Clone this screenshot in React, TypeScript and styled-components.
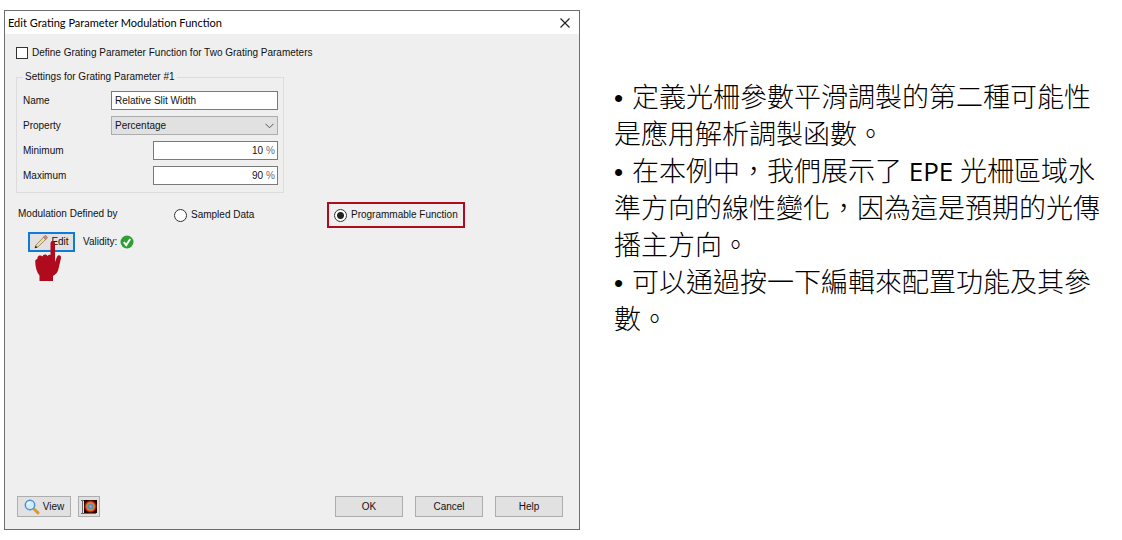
import React from "react";
import styled, { createGlobalStyle } from "styled-components";

const GlobalStyle = createGlobalStyle`
  * { box-sizing: border-box; }
  body {
    margin: 0;
    background: #ffffff;
    color: #111111;
    font-family: "Liberation Sans", Arial, sans-serif;
  }
  button, input, select { font: inherit; color: inherit; }
`;

const Page = styled.main`
  display: flex;
  align-items: stretch;
  gap: 34px;
  min-height: 100vh;
  padding: 10px 16px 10px 4px;
`;

const Dialog = styled.section`
  display: flex;
  flex-direction: column;
  flex: 0 1 576px;
  border: 1px solid #6e6e6e;
  background: #efefef;
  font-size: 10px;
  line-height: 14px;
`;

const TitleBar = styled.header`
  display: flex;
  align-items: center;
  justify-content: space-between;
  height: 23px;
  padding: 0 8px 0 3px;
  background: #ffffff;
`;

const Title = styled.h1`
  margin: 0;
  font: 400 11px/16px Lato, sans-serif;
  color: #000000;
`;

const CloseButton = styled.button`
  display: flex;
  padding: 0;
  border: 0;
  background: transparent;
`;

const Content = styled.form`
  display: flex;
  flex-direction: column;
  flex: 1;
  padding: 12px 16px 12px 11px;
`;

const Option = styled.label`
  display: flex;
  align-items: center;
  gap: 4px;
  white-space: nowrap;
`;

const CheckBox = styled.input`
  appearance: none;
  width: 12px;
  height: 12px;
  margin: 0;
  border: 1px solid #333333;
  background: #ffffff;
`;

const Group = styled.fieldset`
  width: 268px;
  margin: 10px 0 0;
  padding: 7px 5px 7px 6px;
  border: 1px solid #dcdcdc;
`;

const Legend = styled.legend`
  padding: 0 2px;
`;

const Fields = styled.div`
  display: flex;
  flex-direction: column;
  gap: 6px;
`;

const Field = styled.div`
  display: flex;
  align-items: center;
  justify-content: space-between;
`;

const TextInput = styled.input`
  width: 167px;
  height: 19px;
  padding: 0 3px;
  border: 1px solid #7a7a7a;
  border-radius: 0;
  background: #ffffff;
`;

const SelectBox = styled.div`
  display: grid;
  align-items: center;
  width: 167px;
  height: 19px;

  > * { grid-area: 1 / 1; }
  > svg { justify-self: end; margin-right: 4px; pointer-events: none; }
`;

const Select = styled.select`
  appearance: none;
  width: 100%;
  height: 19px;
  padding: 0 3px;
  border: 1px solid #adadad;
  border-radius: 0;
  background: #e1e1e1;
`;

const NumberBox = styled.div`
  display: flex;
  align-items: center;
  gap: 3px;
  width: 125px;
  height: 19px;
  padding-right: 2px;
  border: 1px solid #7a7a7a;
  background: #ffffff;
`;

const NumberInput = styled.input`
  flex: 1;
  min-width: 0;
  padding: 0;
  border: 0;
  background: transparent;
  text-align: right;
`;

const Unit = styled.span`
  color: #6d6d6d;
`;

const ModeRow = styled.div`
  display: grid;
  grid-template-columns: 156px 153px minmax(138px, auto);
  justify-content: start;
  align-items: center;
  margin-top: 9px;
  padding-left: 2px;
`;

const ModeLabel = styled.span`
  padding-bottom: 3px;
`;

const Highlight = styled.div`
  padding: 4px 5px;
  border: 2px solid #b00a1e;
`;

const Radio = styled.input`
  appearance: none;
  width: 13px;
  height: 13px;
  margin: 0;
  border: 1px solid #333333;
  border-radius: 50%;
  background: #ffffff;

  &:checked {
    background: radial-gradient(circle, #222222 0 3px, #ffffff 4px);
  }
`;

const EditRow = styled.div`
  display: flex;
  align-items: center;
  gap: 8px;
  margin-top: 4px;
  padding-left: 12px;
`;

const EditAnchor = styled.div`
  position: relative;
`;

const Pointer = styled.svg`
  position: absolute;
  left: 7px;
  top: 9px;
  pointer-events: none;
`;

const Button = styled.button<{ $width: number; $focused?: boolean }>`
  display: flex;
  align-items: center;
  justify-content: center;
  gap: 3px;
  width: ${(p) => p.$width}px;
  height: ${(p) => (p.$focused ? 20 : 21)}px;
  padding: 0;
  border: ${(p) => (p.$focused ? "2px solid #0f7ad8" : "1px solid #adadad")};
  background: #e1e1e1;
`;

const Validity = styled.span`
  display: flex;
  align-items: center;
  gap: 3px;
`;

const Footer = styled.footer`
  display: flex;
  justify-content: space-between;
  margin-top: auto;
  padding-left: 1px;
`;

const ButtonGroup = styled.div<{ $gap: number }>`
  display: flex;
  gap: ${(p) => p.$gap}px;
`;

const Notes = styled.article`
  flex: 1 1 0;
  min-width: 0;
  padding-top: 67px;
  color: #000000;
  font-family: "Noto Sans CJK TC", sans-serif;
  font-size: 27px;
  font-weight: 300;
  line-height: 37px;
`;

const Note = styled.p`
  margin: 0;
`;

const Latin = styled.span`
  font-family: "Open Sans", sans-serif;
  font-size: 26px;
  font-weight: 400;
  line-height: 1;
`;

const Bullet = styled.span`
  display: inline-block;
  width: 18px;
  font-family: "Liberation Sans", sans-serif;
  font-size: 26px;
  line-height: 1;
`;

const PencilIcon = () => (
  <svg width="14" height="14" viewBox="0 0 14 14" aria-hidden="true">
    <path d="M1.200 12.800l.9-2.800L9.800 2l2.200 2.200-8 7.700z" fill="#f6dc9c" stroke="#7d6a48" strokeWidth=".7" />
    <path d="M9.300 2.300l1.400-1.400c.5-.5 1-.4 1.500.1l.8.8c.5.500.5 1 0 1.500l-1.300 1.400z" fill="#cf8c80" stroke="#8a5a4a" strokeWidth=".6" />
    <path d="M.7 13.300l.9-2.700 1.800 1.800z" fill="#222" />
  </svg>
);

const CheckIcon = () => (
  <svg width="14" height="14" viewBox="0 0 14 14" role="img" aria-label="Valid">
    <circle cx="7" cy="7" r="6.500" fill="#2f9e35" />
    <path d="M3.800 7.200l2.400 2.800 4-6" fill="none" stroke="#fff" strokeWidth="2" />
  </svg>
);

const LensIcon = () => (
  <svg width="16" height="16" viewBox="0 0 16 16" aria-hidden="true">
    <path d="M10 10l4 3.800" stroke="#e09a2b" strokeWidth="3" strokeLinecap="round" />
    <circle cx="6" cy="6" r="4.700" fill="#d3ebfb" stroke="#4a93d4" strokeWidth="1.500" />
    <path d="M3.600 5.500a2.600 2.600 0 0 1 2.400-2" fill="none" stroke="#fff" strokeWidth="1.200" />
  </svg>
);

const FieldIcon = () => (
  <svg width="16" height="16" viewBox="0 0 16 16" aria-hidden="true">
    <path d="M1.500 1v13.500H15M0 1.500h3M0 14.500h2" fill="none" stroke="#666" />
    <rect x="3" y="1" width="13" height="13" fill="#1c0505" />
    <circle cx="9.500" cy="7.500" r="6.200" fill="#8d1208" />
    <circle cx="9.500" cy="7.500" r="5.200" fill="#e8351c" />
    <circle cx="9.500" cy="7.500" r="4.200" fill="#d9a02c" />
    <circle cx="9.500" cy="7.500" r="3.500" fill="#59b04c" />
    <circle cx="9.500" cy="7.500" r="2.400" fill="#5f82e0" />
    <circle cx="9.500" cy="7.500" r="1.200" fill="#c58be0" />
  </svg>
);

const HandIcon = () => (
  <Pointer width="28" height="40" viewBox="0 0 28 40" aria-hidden="true">
    <path
      d="M15.500 2.500C15.500.8 16.400 0 17.700 0S20 .8 20 2.500V21l1.800-4.800c.7-1.700 1.800-2.200 2.900-1.800 1.200.4 1.500 1.500 1.200 3l-2.700 11.600c-.6 2.600-2.800 4.500-5.200 6V40H4.500v-5.500C2 31.500.3 26.500.2 20.500c0-1.700.9-2.600 2.200-2.600-.1-2 .9-3 2.100-3.300 1.300-.3 2.300.1 2.900.8.4-1.200 1.300-1.900 2.500-2 1.300-.1 2.200.6 2.700 1.500.5-.6 1.500-1.200 2.900-1z"
      fill="#b00a1e"
    />
  </Pointer>
);

interface RangeFieldProps {
  id: string;
  label: string;
  value: string;
}

const RangeField = ({ id, label, value }: RangeFieldProps) => (
  <Field>
    <label htmlFor={id}>{label}</label>
    <NumberBox>
      <NumberInput id={id} defaultValue={value} />
      <Unit>%</Unit>
    </NumberBox>
  </Field>
);

export default function App() {
  return (
    <>
      <GlobalStyle />
      <Page>
        <Dialog aria-labelledby="dialog-title">
          <TitleBar>
            <Title id="dialog-title">Edit Grating Parameter Modulation Function</Title>
            <CloseButton type="button" aria-label="Close">
              <svg width="12" height="12" viewBox="0 0 12 12">
                <path d="M1.500 1.500l9 9M10.500 1.500l-9 9" stroke="#222" strokeWidth="1.200" />
              </svg>
            </CloseButton>
          </TitleBar>
          <Content onSubmit={(e) => e.preventDefault()}>
            <Option>
              <CheckBox type="checkbox" />
              Define Grating Parameter Function for Two Grating Parameters
            </Option>
            <Group>
              <Legend>Settings for Grating Parameter #1</Legend>
              <Fields>
                <Field>
                  <label htmlFor="name">Name</label>
                  <TextInput id="name" defaultValue="Relative Slit Width" />
                </Field>
                <Field>
                  <label htmlFor="property">Property</label>
                  <SelectBox>
                    <Select id="property">
                      <option>Percentage</option>
                    </Select>
                    <svg width="9" height="6" viewBox="0 0 9 6" aria-hidden="true">
                      <path d="M.5.800l4 4 4-4" fill="none" stroke="#555" />
                    </svg>
                  </SelectBox>
                </Field>
                <RangeField id="minimum" label="Minimum" value="10" />
                <RangeField id="maximum" label="Maximum" value="90" />
              </Fields>
            </Group>
            <ModeRow role="radiogroup" aria-labelledby="mode-label">
              <ModeLabel id="mode-label">Modulation Defined by</ModeLabel>
              <Option>
                <Radio type="radio" name="mode" />
                Sampled Data
              </Option>
              <Highlight>
                <Option>
                  <Radio type="radio" name="mode" defaultChecked />
                  Programmable Function
                </Option>
              </Highlight>
            </ModeRow>
            <EditRow>
              <EditAnchor>
                <Button type="button" $width={47} $focused>
                  <PencilIcon />
                  Edit
                </Button>
                <HandIcon />
              </EditAnchor>
              <Validity>
                Validity:
                <CheckIcon />
              </Validity>
            </EditRow>
            <Footer>
              <ButtonGroup $gap={7}>
                <Button type="button" $width={54}>
                  <LensIcon />
                  View
                </Button>
                <Button type="button" $width={22} aria-label="Show field">
                  <FieldIcon />
                </Button>
              </ButtonGroup>
              <ButtonGroup $gap={12}>
                <Button type="submit" $width={68}>OK</Button>
                <Button type="button" $width={68}>Cancel</Button>
                <Button type="button" $width={68}>Help</Button>
              </ButtonGroup>
            </Footer>
          </Content>
        </Dialog>
        <Notes lang="zh-Hant">
          <Note><Bullet>•</Bullet>定義光柵參數平滑調製的第二種可能性是應用解析調製函數。</Note>
          <Note><Bullet>•</Bullet>在本例中，我們展示了<Latin> EPE </Latin>光柵區域水準方向的線性變化，因為這是預期的光傳播主方向。</Note>
          <Note><Bullet>•</Bullet>可以通過按一下編輯來配置功能及其參數。</Note>
        </Notes>
      </Page>
    </>
  );
}
